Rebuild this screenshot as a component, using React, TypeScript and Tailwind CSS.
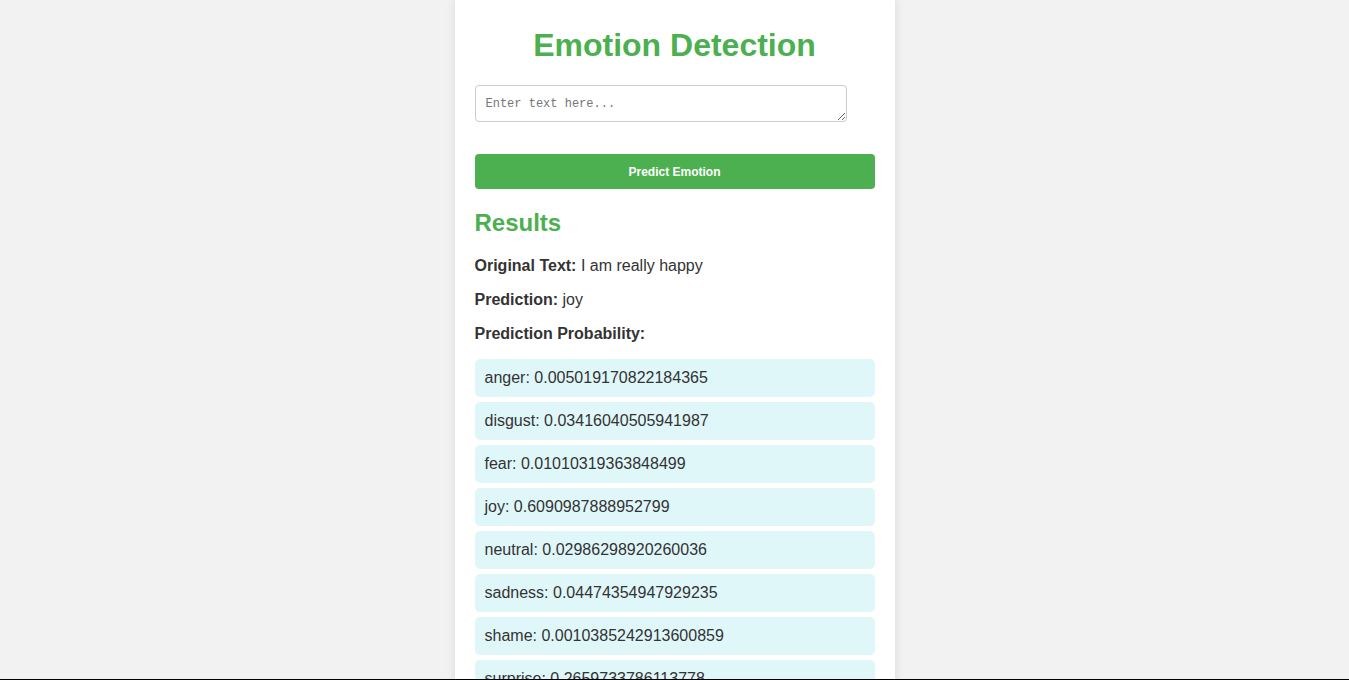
const probabilities: [string, string][] = [
  ['anger', '0.005019170822184365'],
  ['disgust', '0.03416040505941987'],
  ['fear', '0.01010319363848499'],
  ['joy', '0.6090987888952799'],
  ['neutral', '0.02986298920260036'],
  ['sadness', '0.04474354947929235'],
  ['shame', '0.0010385242913600859'],
  ['surprise', '0.2659733786113778'],
]

export default function App() {
  return (
    <div className="min-h-screen bg-[#f2f2f2] font-['Liberation_Sans',Arial,sans-serif] text-[#333]">
      <div className="mx-auto w-[440px] bg-white px-5 pt-[27px] pb-5 shadow-[0_0_10px_rgba(0,0,0,0.1)]">
        <h1 className="mb-[21px] text-center text-[32px] font-bold leading-[37px] text-[#4caf50]">
          Emotion Detection
        </h1>
        <textarea
          placeholder="Enter text here..."
          className="block h-[37px] w-[372px] rounded-[4px] border border-[#ccc] px-[10px] pt-[11px] pb-[9px] font-['Liberation_Mono',monospace] text-[12px] leading-[15px] placeholder:text-[#757575]"
        />
        <button className="mt-[32px] block h-[35px] w-full rounded-[4px] bg-[#4caf50] text-[12px] font-bold text-white">
          Predict Emotion
        </button>
        <h2 className="mt-5 mb-5 text-[24px] font-bold leading-[28px] text-[#4caf50]">Results</h2>
        <p className="text-[16px] leading-[18px]">
          <strong>Original Text:</strong> I am really happy
        </p>
        <p className="mt-4 text-[16px] leading-[18px]">
          <strong>Prediction:</strong> joy
        </p>
        <p className="mt-4 text-[16px] leading-[18px]">
          <strong>Prediction Probability:</strong>
        </p>
        <ul className="mt-4 flex flex-col gap-[5px]">
          {probabilities.map(([label, value]) => (
            <li key={label} className="rounded-[5px] bg-[#e0f7fa] px-[10px] py-[10px] text-[16px] leading-[18px]">
              {label}: {value}
            </li>
          ))}
        </ul>
      </div>
      <div className="fixed inset-x-0 bottom-0 h-px bg-black" />
    </div>
  )
}
